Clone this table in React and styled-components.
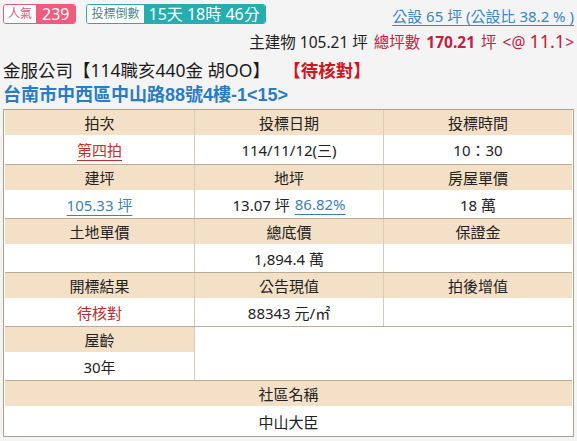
import React from "react";
import styled, { createGlobalStyle } from "styled-components";

const Global = createGlobalStyle`
  html, body { margin: 0; padding: 0; background: #f4f4f4; }
  body { font-family: "Noto Sans", "Noto Sans CJK TC", sans-serif; color: #222; }
`;

const Page = styled.div`
  width: 577px;
  padding: 4px 3px 0 3px;
  box-sizing: border-box;
`;

const TopBar = styled.div`
  display: flex;
  align-items: center;
  justify-content: space-between;
  height: 20px;
`;

const Badges = styled.div`
  display: flex;
  gap: 10px;
`;

const Badge = styled.div`
  display: flex;
  height: 20px;
  border: 1px solid ${(p) => p.$color};
  border-radius: 3px;
  box-sizing: border-box;
  overflow: hidden;
  line-height: 1;
`;

const BadgeLabel = styled.span`
  display: flex;
  align-items: center;
  padding: 0 4px;
  background: #fff;
  color: ${(p) => p.$color};
  font-size: 12px;
`;

const BadgeValue = styled.span`
  display: flex;
  align-items: center;
  padding: 0 ${(p) => p.$pad}px;
  background: ${(p) => p.$color};
  color: #fff;
  font-size: ${(p) => p.$size}px;
  white-space: nowrap;
`;

const CommonLink = styled.a`
  color: #3a86c6;
  font-size: 15px;
  text-decoration: underline;
  text-underline-offset: 3px;
  margin-top: 2px;
`;

const AreaLine = styled.div`
  display: flex;
  justify-content: flex-end;
  align-items: baseline;
  gap: 6px;
  font-size: 15.5px;
  margin-top: 5px;
  height: 22px;
  color: #222;
`;

const Red = styled.span`
  color: #c4203e;
  font-weight: ${(p) => (p.$bold ? 700 : 400)};
  font-size: ${(p) => p.$size || 15.5}px;
`;

const TitleLine = styled.div`
  font-size: 17.5px;
  height: 26px;
  line-height: 26px;
  margin-top: 6px;
  color: #1a1a1a;
  white-space: nowrap;
`;

const Status = styled.span`
  color: #d4141c;
  font-weight: 700;
  margin-left: 22px;
`;

const Address = styled.div`
  font-family: "Liberation Sans", "Noto Sans CJK TC", sans-serif;
  font-size: 18px;
  font-weight: 700;
  color: #2a7cc6;
  height: 24px;
  line-height: 24px;
  white-space: nowrap;
`;

const Table = styled.div`
  margin-top: 2px;
  border: 1px solid #ada18a;
  background: #fff;
  padding: 0 1px;
  width: 571px;
  box-sizing: border-box;
`;

const Block = styled.div`
  display: grid;
  grid-template-columns: 1fr 1fr 1fr;
  grid-template-rows: 25px ${(p) => p.$dataH || 28}px;
  border-top: ${(p) => (p.$first ? "none" : "1px solid #b9ad96")};
`;

const Head = styled.div`
  background: #f4e0c7;
  display: flex;
  align-items: center;
  justify-content: center;
  font-size: 15px;
  color: #222;
  grid-column: ${(p) => p.$span || "auto"};
  border-left: ${(p) => (p.$divider ? "1px solid #d9ccb8" : "none")};
`;

const Cell = styled.div`
  display: flex;
  align-items: center;
  justify-content: center;
  font-size: 15px;
  color: #222;
  grid-column: ${(p) => p.$span || "auto"};
  grid-row: ${(p) => p.$rows || "auto"};
  border-left: ${(p) => (p.$divider ? "1px solid #d9ccb8" : "none")};
  gap: 5px;
`;

const RedLink = styled.span`
  color: #c0322e;
  text-decoration: underline;
  text-underline-offset: 4px;
`;

const BlueLink = styled.span`
  color: #3a7fc0;
  text-decoration: underline;
  text-underline-offset: 4px;
`;

const RedText = styled.span`
  color: #c8282c;
`;

const rows = [
  {
    heads: ["拍次", "投標日期", "投標時間"],
    cells: [
      <RedLink>第四拍</RedLink>,
      "114/11/12(三)",
      "10：30",
    ],
    dataH: 29,
  },
  {
    heads: ["建坪", "地坪", "房屋單價"],
    cells: [
      <BlueLink>105.33 坪</BlueLink>,
      <>13.07 坪 <BlueLink>86.82%</BlueLink></>,
      "18 萬",
    ],
  },
  {
    heads: ["土地單價", "總底價", "保證金"],
    cells: ["", "1,894.4 萬", ""],
  },
  {
    heads: ["開標結果", "公告現值", "拍後增值"],
    cells: [<RedText>待核對</RedText>, "88343 元/㎡", ""],
  },
];

export default function App() {
  return (
    <>
      <Global />
      <Page>
        <TopBar>
          <Badges>
            <Badge $color="#ee5a7c">
              <BadgeLabel $color="#d4607c">人氣</BadgeLabel>
              <BadgeValue $color="#f05c7e" $size={16} $pad={6}>239</BadgeValue>
            </Badge>
            <Badge $color="#25adb0">
              <BadgeLabel $color="#4f8a8c">投標倒數</BadgeLabel>
              <BadgeValue $color="#25adb0" $size={16} $pad={5}>15天 18時 46分</BadgeValue>
            </Badge>
          </Badges>
          <CommonLink>公設 65 坪 (公設比 38.2 % )</CommonLink>
        </TopBar>
        <AreaLine>
          <span>主建物 105.21 坪</span>
          <Red>總坪數</Red>
          <Red $bold>170.21</Red>
          <Red>坪</Red>
          <Red>&lt;@ <Red $size={18}>11.1</Red>&gt;</Red>
        </AreaLine>
        <TitleLine>
          金服公司【114職亥440金 胡OO】<Status>【待核對】</Status>
        </TitleLine>
        <Address>台南市中西區中山路88號4樓-1&lt;15&gt;</Address>
        <Table>
          {rows.map((r, i) => (
            <Block key={i} $first={i === 0} $dataH={r.dataH}>
              {r.heads.map((h, j) => (
                <Head key={h} $divider={j > 0}>{h}</Head>
              ))}
              {r.cells.map((c, j) => (
                <Cell key={j} $divider={j > 0}>{c}</Cell>
              ))}
            </Block>
          ))}
          <Block>
            <Head>屋齡</Head>
            <Cell $span="2 / 4" $rows="1 / 3" $divider />
            <Cell>30年</Cell>
          </Block>
          <Block $dataH={30}>
            <Head $span="1 / 4">社區名稱</Head>
            <Cell $span="1 / 4">中山大臣</Cell>
          </Block>
        </Table>
      </Page>
    </>
  );
}
